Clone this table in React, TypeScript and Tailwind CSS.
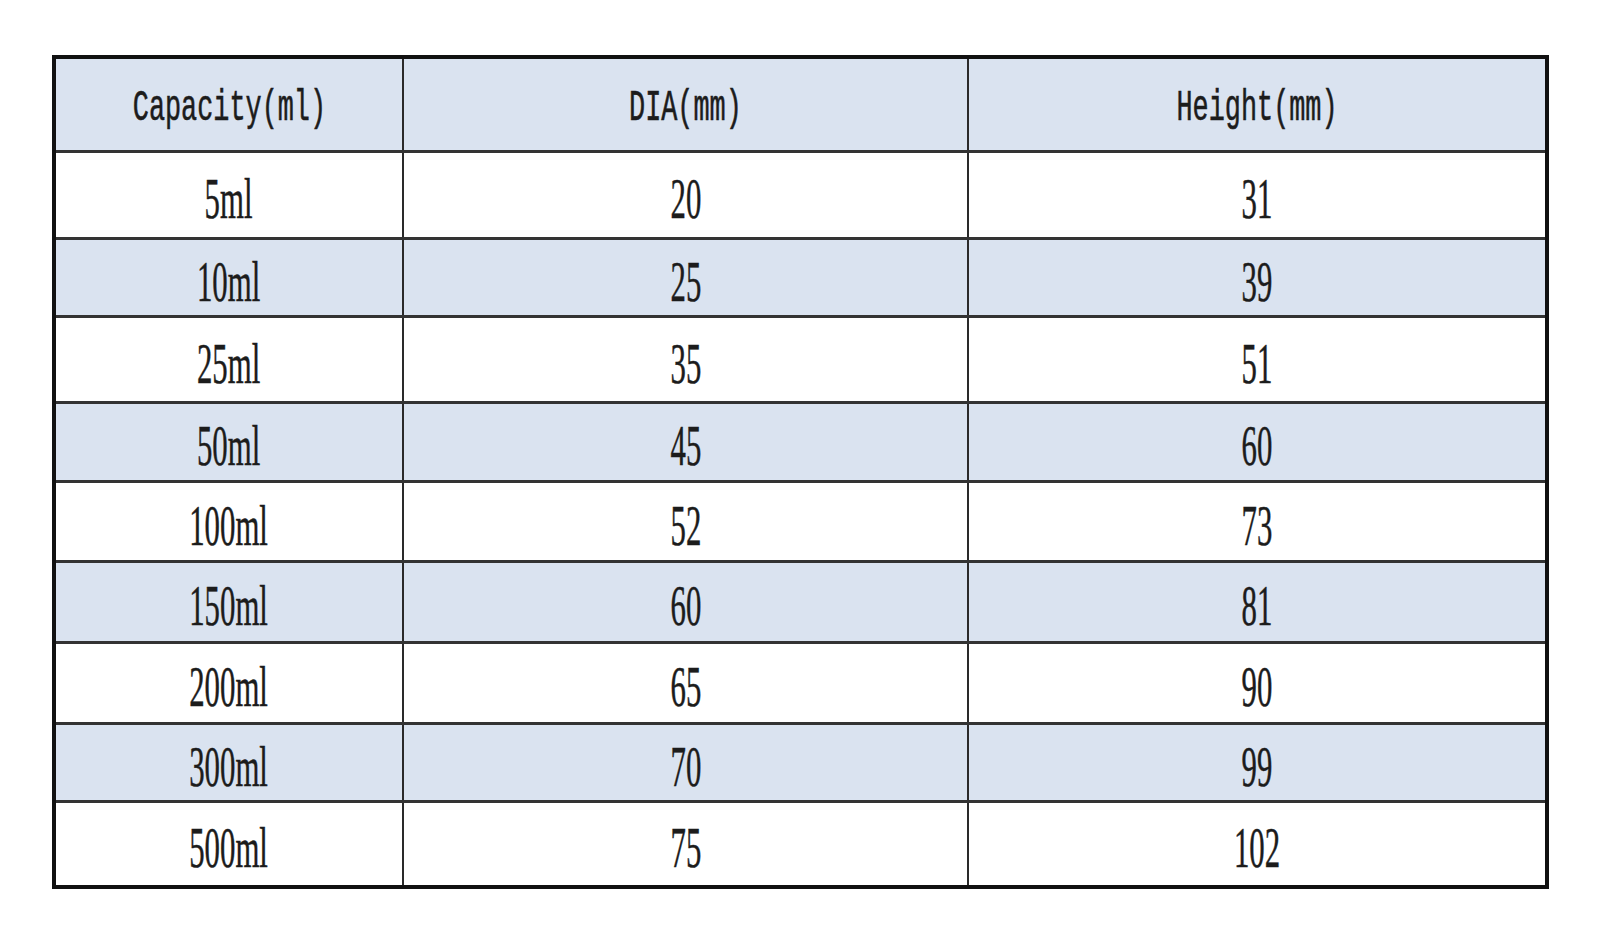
const rows: [string, string, string, number][] = [
  ['5ml', '20', '31', 87],
  ['10ml', '25', '39', 78],
  ['25ml', '35', '51', 86],
  ['50ml', '45', '60', 79],
  ['100ml', '52', '73', 80],
  ['150ml', '60', '81', 81],
  ['200ml', '65', '90', 81],
  ['300ml', '70', '99', 78],
  ['500ml', '75', '102', 85],
];

function Cell({ text, first, head }: { text: string; first?: boolean; head?: boolean }) {
  return (
    <div
      className={`flex items-center justify-center ${first ? '' : 'border-l-2 border-[#2a2a2a]'}`}
    >
      <span
        className={`inline-block whitespace-nowrap leading-none text-[#1c1c1c] ${
          head
            ? "text-[44px] scale-x-[0.61] translate-y-[3px] [font-family:'Liberation_Mono',monospace] [-webkit-text-stroke:0.6px_#1c1c1c]"
            : "text-[56px] scale-x-[0.55] translate-y-[4px] [font-family:'Liberation_Serif',serif] [-webkit-text-stroke:0.5px_#1c1c1c]"
        }`}
      >
        {text}
      </span>
    </div>
  );
}

export default function App() {
  return (
    <div className="w-[1600px] h-[942px] bg-white pt-[55px] pl-[52px]">
      <div className="w-[1497px] border-4 border-[#111]">
        {/* Header */}
        <div className="grid grid-cols-[346px_565px_578px] h-[91px] bg-[#dae3f0]">
          <Cell text="Capacity(ml)" first head />
          <Cell text="DIA(mm)" head />
          <Cell text="Height(mm)" head />
        </div>

        {rows.map(([cap, dia, h, height], i) => (
          <div
            key={cap}
            className={`grid grid-cols-[346px_565px_578px] border-t-[3px] border-[#333] ${
              i % 2 === 1 ? 'bg-[#dae3f0]' : 'bg-white'
            }`}
            style={{ height }}
          >
            <Cell text={cap} first />
            <Cell text={dia} />
            <Cell text={h} />
          </div>
        ))}
      </div>
    </div>
  );
}
